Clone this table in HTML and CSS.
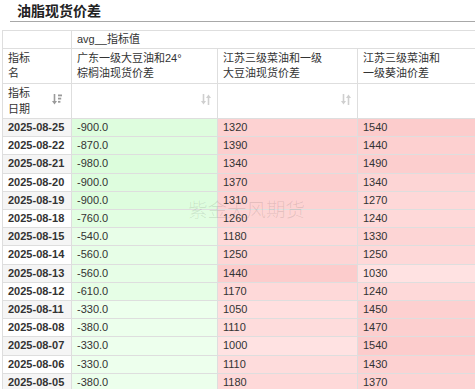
FILE: index.html
```html
<!DOCTYPE html>
<html lang="zh">
<head>
<meta charset="utf-8">
<title>油脂现货价差</title>
<link rel="stylesheet" href="styles.css">
</head>
<body>
<div class="title-bar"><h1 class="title">油脂现货价差</h1></div>
<div class="table-wrap">
<table class="pivot">
<colgroup><col class="c1"><col class="c2"><col class="c3"><col class="c4"></colgroup>
<thead>
<tr class="h1row"><th></th><th colspan="3">avg__指标值</th></tr>
<tr class="h2row"><th>指标<br>名</th><th>广东一级大豆油和24°<br>棕榈油现货价差</th><th>江苏三级菜油和一级<br>大豆油现货价差</th><th>江苏三级菜油和<br>一级葵油价差</th></tr>
<tr class="h3row">
<th><div class="h3cell"><span>指标<br>日期</span><svg class="ico ico-dark" viewBox="0 0 10 11" width="10" height="11"><path d="M2.5 0v8" stroke="currentColor" stroke-width="1.6"/><path d="M0 7l2.5 3.5L5 7z" fill="currentColor"/><rect x="6" y="0.5" width="4" height="1.8" fill="currentColor"/><rect x="6" y="3.7" width="3.2" height="1.8" fill="currentColor"/><rect x="6" y="6.9" width="2.4" height="1.8" fill="currentColor"/></svg></div></th>
<th><div class="h3cell"><span></span><svg class="ico" viewBox="0 0 10 11" width="10" height="11"><path d="M2.5 0v8" stroke="currentColor" stroke-width="1.6"/><path d="M0 7l2.5 3.5L5 7z" fill="currentColor"/><path d="M7.5 11V3" stroke="currentColor" stroke-width="1.6"/><path d="M5 4l2.5-3.5L10 4z" fill="currentColor"/></svg></div></th>
<th><div class="h3cell"><span></span><svg class="ico" viewBox="0 0 10 11" width="10" height="11"><path d="M2.5 0v8" stroke="currentColor" stroke-width="1.6"/><path d="M0 7l2.5 3.5L5 7z" fill="currentColor"/><path d="M7.5 11V3" stroke="currentColor" stroke-width="1.6"/><path d="M5 4l2.5-3.5L10 4z" fill="currentColor"/></svg></div></th>
<th><div class="h3cell"><span></span><svg class="ico" viewBox="0 0 10 11" width="10" height="11"><path d="M2.5 0v8" stroke="currentColor" stroke-width="1.6"/><path d="M0 7l2.5 3.5L5 7z" fill="currentColor"/><path d="M7.5 11V3" stroke="currentColor" stroke-width="1.6"/><path d="M5 4l2.5-3.5L10 4z" fill="currentColor"/></svg></div></th>
</tr>
</thead>
<tbody>
<tr class="odd"><td class="date">2025-08-25</td><td style="background:rgb(222,253,222)">-900.0</td><td style="background:rgb(253,210,210)">1320</td><td style="background:rgb(252,204,204)">1540</td></tr>
<tr><td class="date">2025-08-22</td><td style="background:rgb(223,253,223)">-870.0</td><td style="background:rgb(252,206,206)">1390</td><td style="background:rgb(253,208,208)">1440</td></tr>
<tr class="odd"><td class="date">2025-08-21</td><td style="background:rgb(220,253,220)">-980.0</td><td style="background:rgb(253,209,209)">1340</td><td style="background:rgb(252,206,206)">1490</td></tr>
<tr><td class="date">2025-08-20</td><td style="background:rgb(222,253,222)">-900.0</td><td style="background:rgb(252,207,207)">1370</td><td style="background:rgb(253,213,213)">1340</td></tr>
<tr class="odd"><td class="date">2025-08-19</td><td style="background:rgb(222,253,222)">-900.0</td><td style="background:rgb(253,210,210)">1310</td><td style="background:rgb(254,216,216)">1270</td></tr>
<tr><td class="date">2025-08-18</td><td style="background:rgb(226,254,226)">-760.0</td><td style="background:rgb(253,213,213)">1260</td><td style="background:rgb(254,217,217)">1240</td></tr>
<tr class="odd"><td class="date">2025-08-15</td><td style="background:rgb(232,254,232)">-540.0</td><td style="background:rgb(254,217,217)">1180</td><td style="background:rgb(253,213,213)">1330</td></tr>
<tr><td class="date">2025-08-14</td><td style="background:rgb(231,254,231)">-560.0</td><td style="background:rgb(253,213,213)">1250</td><td style="background:rgb(254,216,216)">1250</td></tr>
<tr class="odd"><td class="date">2025-08-13</td><td style="background:rgb(231,254,231)">-560.0</td><td style="background:rgb(252,204,204)">1440</td><td style="background:rgb(255,226,226)">1030</td></tr>
<tr><td class="date">2025-08-12</td><td style="background:rgb(230,254,230)">-610.0</td><td style="background:rgb(254,217,217)">1170</td><td style="background:rgb(254,217,217)">1240</td></tr>
<tr class="odd"><td class="date">2025-08-11</td><td style="background:rgb(237,255,237)">-330.0</td><td style="background:rgb(255,223,223)">1050</td><td style="background:rgb(253,208,208)">1450</td></tr>
<tr><td class="date">2025-08-08</td><td style="background:rgb(236,255,236)">-380.0</td><td style="background:rgb(254,220,220)">1110</td><td style="background:rgb(252,207,207)">1470</td></tr>
<tr class="odd"><td class="date">2025-08-07</td><td style="background:rgb(237,255,237)">-330.0</td><td style="background:rgb(255,226,226)">1000</td><td style="background:rgb(252,204,204)">1540</td></tr>
<tr><td class="date">2025-08-06</td><td style="background:rgb(237,255,237)">-330.0</td><td style="background:rgb(254,220,220)">1110</td><td style="background:rgb(253,209,209)">1430</td></tr>
<tr class="odd"><td class="date">2025-08-05</td><td style="background:rgb(236,255,236)">-380.0</td><td style="background:rgb(254,217,217)">1180</td><td style="background:rgb(253,211,211)">1370</td></tr>
</tbody>
</table>
<div class="watermark">紫金天风期货</div>
</div>
</body>
</html>
```

FILE: styles.css
```css
html, body {
  margin: 0;
  padding: 0;
  overflow: hidden;
  background: #fff;
}
body {
  width: 475px;
  height: 389px;
  font-family: "Liberation Sans", "Noto Sans CJK SC", sans-serif;
  color: #333;
}
.title-bar {
  margin: 0 0 0 10px;
  padding-left: 7px;
  height: 21px;
  border-bottom: 1px solid #a8a8a8;
}
.title {
  margin: 0;
  font-family: "Noto Sans CJK SC", sans-serif;
  font-size: 14px;
  font-weight: 700;
  line-height: 21px;
  color: #222;
}
.table-wrap {
  position: relative;
  margin-top: 8px;
  padding-left: 2px;
}
.pivot {
  border-collapse: collapse;
  table-layout: fixed;
  width: 495px;
  font-size: 11px;
}
.c1 { width: 69px; }
.c2 { width: 146px; }
.c3 { width: 140px; }
.c4 { width: 140px; }
.pivot th, .pivot td {
  border: 1px solid #dedede;
  padding: 0 5px;
  text-align: left;
  vertical-align: middle;
  white-space: nowrap;
  overflow: hidden;
}
.pivot th {
  font-weight: 400;
  background: #fff;
  color: #333;
}
.h1row th { line-height: 17px; }
.h2row th { line-height: 15px; padding-top: 2px; padding-bottom: 2px; }
.h3row th { line-height: 16px; padding-top: 1px; padding-bottom: 1px; }
.h3cell {
  display: flex;
  align-items: center;
  justify-content: space-between;
  min-height: 32px;
}
.ico { color: #cfcfcf; flex: none; margin-right: 1px; margin-top: -4px; }
.ico-dark { color: #9a9a9a; margin-right: 4px; }
.pivot td {
  line-height: 17.2px;
  font-size: 11px;
}
.pivot td.date {
  font-weight: 700;
  background: #fff;
  color: #333;
}
.pivot tr.odd td.date { background: #f5f5f5; }
.watermark {
  position: absolute;
  left: 188px;
  top: 166px;
  font-family: "Noto Sans CJK SC", sans-serif;
  font-size: 19.5px;
  line-height: 26px;
  font-weight: 300;
  color: rgba(0, 0, 0, 0.11);
  pointer-events: none;
  white-space: nowrap;
}
```
